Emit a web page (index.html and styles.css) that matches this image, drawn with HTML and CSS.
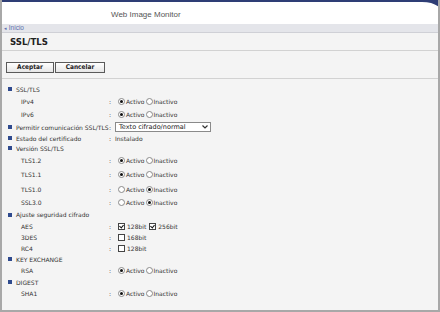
FILE: index.html
```html
<!DOCTYPE html>
<html lang="es">
<head>
    <meta charset="UTF-8">
    <title>SSL/TLS - Web Image Monitor</title>
    <link rel="stylesheet" href="styles.css">
</head>
<body>
    <div class="page">
        <header class="top">
            <div class="brand">Web Image Monitor</div>
            <svg class="swoosh" width="24" height="8" viewBox="0 0 24 8">
                <path d="M0 0 H24 V8 C20 4 14 2 6 2 C3 2 1 1 0 0 Z" fill="#2e3d75"/>
            </svg>
        </header>
        <div class="crumb"><span class="arrow">◂</span> Inicio</div>

        <div class="content">
            <h1 class="title">SSL/TLS</h1>

            <div class="actions">
                <button class="btn btn-ok">Aceptar</button>
                <button class="btn btn-cancel">Cancelar</button>
            </div>

            <div class="rows">
                <div class="row h12">
                    <span class="label head"><i class="bullet"></i>SSL/TLS</span>
                </div>
                <div class="row h13">
                    <span class="label sub">IPv4</span><span class="sep">:</span>
                    <span class="value"><i class="radio on"></i>Activo<i class="radio"></i>Inactivo</span>
                </div>
                <div class="row h13">
                    <span class="label sub">IPv6</span><span class="sep">:</span>
                    <span class="value"><i class="radio on"></i>Activo<i class="radio"></i>Inactivo</span>
                </div>
                <div class="row h12">
                    <span class="label head"><i class="bullet"></i>Permitir comunicación SSL/TLS</span><span class="sep">:</span>
                    <span class="value">
                        <span class="select">Texto cifrado/normal
                            <svg class="chev" width="6" height="4" viewBox="0 0 6 4"><path d="M0.5 0.5 L3 3 L5.5 0.5" fill="none" stroke="#333" stroke-width="1.2"/></svg>
                        </span>
                    </span>
                </div>
                <div class="row h10">
                    <span class="label head"><i class="bullet"></i>Estado del certificado</span><span class="sep">:</span>
                    <span class="value">Instalado</span>
                </div>
                <div class="row h10">
                    <span class="label head"><i class="bullet"></i>Versión SSL/TLS</span>
                </div>
                <div class="row h14">
                    <span class="label sub">TLS1.2</span><span class="sep">:</span>
                    <span class="value"><i class="radio on"></i>Activo<i class="radio"></i>Inactivo</span>
                </div>
                <div class="row h15">
                    <span class="label sub">TLS1.1</span><span class="sep">:</span>
                    <span class="value"><i class="radio on"></i>Activo<i class="radio"></i>Inactivo</span>
                </div>
                <div class="row h14">
                    <span class="label sub">TLS1.0</span><span class="sep">:</span>
                    <span class="value"><i class="radio"></i>Activo<i class="radio on"></i>Inactivo</span>
                </div>
                <div class="row h13">
                    <span class="label sub">SSL3.0</span><span class="sep">:</span>
                    <span class="value"><i class="radio"></i>Activo<i class="radio on"></i>Inactivo</span>
                </div>
                <div class="row h11">
                    <span class="label head"><i class="bullet"></i>Ajuste seguridad cifrado</span>
                </div>
                <div class="row h12">
                    <span class="label sub">AES</span><span class="sep">:</span>
                    <span class="value"><i class="check on"></i>128bit<i class="check on"></i>256bit</span>
                </div>
                <div class="row h11">
                    <span class="label sub">3DES</span><span class="sep">:</span>
                    <span class="value"><i class="check"></i>168bit</span>
                </div>
                <div class="row h11">
                    <span class="label sub">RC4</span><span class="sep">:</span>
                    <span class="value"><i class="check"></i>128bit</span>
                </div>
                <div class="row h10">
                    <span class="label head"><i class="bullet"></i>KEY EXCHANGE</span>
                </div>
                <div class="row h13">
                    <span class="label sub">RSA</span><span class="sep">:</span>
                    <span class="value"><i class="radio on"></i>Activo<i class="radio"></i>Inactivo</span>
                </div>
                <div class="row h10">
                    <span class="label head"><i class="bullet"></i>DIGEST</span>
                </div>
                <div class="row h12">
                    <span class="label sub">SHA1</span><span class="sep">:</span>
                    <span class="value"><i class="radio on"></i>Activo<i class="radio"></i>Inactivo</span>
                </div>
            </div>
        </div>
    </div>
</body>
</html>
```

FILE: styles.css
```css
body {
    margin: 0;
    font-family: "DejaVu Sans", Verdana, sans-serif;
    background-color: #f4f4f4;
}

.page {
    width: 440px;
    height: 312px;
    box-sizing: border-box;
    border-left: 2px solid #a8a8a8;
    border-right: 2px solid #a8a8a8;
    border-bottom: 2px solid #a8a8a8;
    background-color: #f4f4f4;
    display: flex;
    flex-direction: column;
    overflow: hidden;
}

/* cabecera */
.top {
    position: relative;
    height: 24px;
    box-sizing: border-box;
    border-top: 2px solid #2e3d75;
    background-color: #ffffff;
    display: flex;
    align-items: center;
    padding-left: 109px;
}

.brand {
    font-family: "Liberation Sans", Arial, sans-serif;
    font-size: 8px;
    color: #555;
    padding-top: 3px;
}

.swoosh {
    position: absolute;
    top: -2px;
    right: -2px;
}

.crumb {
    height: 8px;
    line-height: 8px;
    background-color: #e4e5ea;
    border-bottom: 1px solid #cfd0d6;
    font-family: "Liberation Sans", Arial, sans-serif;
    font-size: 6.5px;
    color: #5b6fae;
    padding-left: 2px;
}

.crumb .arrow {
    font-size: 5px;
}

.content {
    flex: 1;
}

.title {
    margin: 0;
    height: 17px;
    line-height: 18px;
    padding-left: 8px;
    font-family: "DejaVu Sans Condensed", "DejaVu Sans", sans-serif;
    font-stretch: condensed;
    font-size: 9.5px;
    font-weight: bold;
    color: #222;
    border-bottom: 1px solid #d2d2d2;
}

.actions {
    display: flex;
    gap: 1px;
    padding: 11px 0 0 4px;
    height: 16px;
    border-bottom: 1px solid #d2d2d2;
}

.btn {
    height: 11px;
    padding: 0;
    border: 1px solid #5a5a5a;
    background: linear-gradient(#ffffff, #e6e6e6);
    font-family: "DejaVu Sans Condensed", "DejaVu Sans", sans-serif;
    font-stretch: condensed;
    font-size: 6.5px;
    font-weight: bold;
    color: #222;
    line-height: 9px;
}

.btn-ok {
    width: 48px;
}

.btn-cancel {
    width: 50px;
}

/* filas */
.rows {
    padding-top: 4px;
}

.row {
    display: grid;
    grid-template-columns: 107px 6px 1fr;
    align-items: center;
    font-size: 6px;
    color: #333;
}

.h10 { height: 10px; }
.h11 { height: 11px; }
.h12 { height: 12px; }
.h13 { height: 13px; }
.h14 { height: 14px; }
.h15 { height: 15px; }

.label {
    white-space: nowrap;
    overflow: visible;
}

.label.head {
    display: flex;
    align-items: center;
    padding-left: 6px;
}

.label.sub {
    padding-left: 19px;
}

.bullet {
    flex-shrink: 0;
    width: 4px;
    height: 4px;
    background-color: #2f4a8e;
    margin-right: 4px;
}

.value {
    display: flex;
    align-items: center;
    white-space: nowrap;
}

.radio {
    flex-shrink: 0;
    width: 5px;
    height: 5px;
    border: 1px solid #8a8a8a;
    border-radius: 50%;
    background-color: #fff;
    position: relative;
    margin: 0 1px 0 3px;
}

.value .radio:nth-of-type(2) {
    margin-left: 1px;
}

.radio.on::after {
    content: "";
    position: absolute;
    left: 1px;
    top: 1px;
    width: 3px;
    height: 3px;
    border-radius: 50%;
    background-color: #111;
}

.check {
    flex-shrink: 0;
    width: 5px;
    height: 5px;
    border: 1px solid #444;
    background-color: #fff;
    position: relative;
    margin: 0 2px 0 3px;
}

.check.on::after {
    content: "";
    position: absolute;
    left: 1px;
    top: 0;
    width: 2px;
    height: 3px;
    border-right: 1px solid #111;
    border-bottom: 1px solid #111;
    transform: rotate(40deg);
}

.select {
    width: 96px;
    height: 10px;
    box-sizing: border-box;
    border: 1px solid #8a8a8a;
    background-color: #fff;
    display: flex;
    align-items: center;
    justify-content: space-between;
    padding: 0 2px 0 3px;
    font-size: 6.5px;
    color: #222;
}
```
